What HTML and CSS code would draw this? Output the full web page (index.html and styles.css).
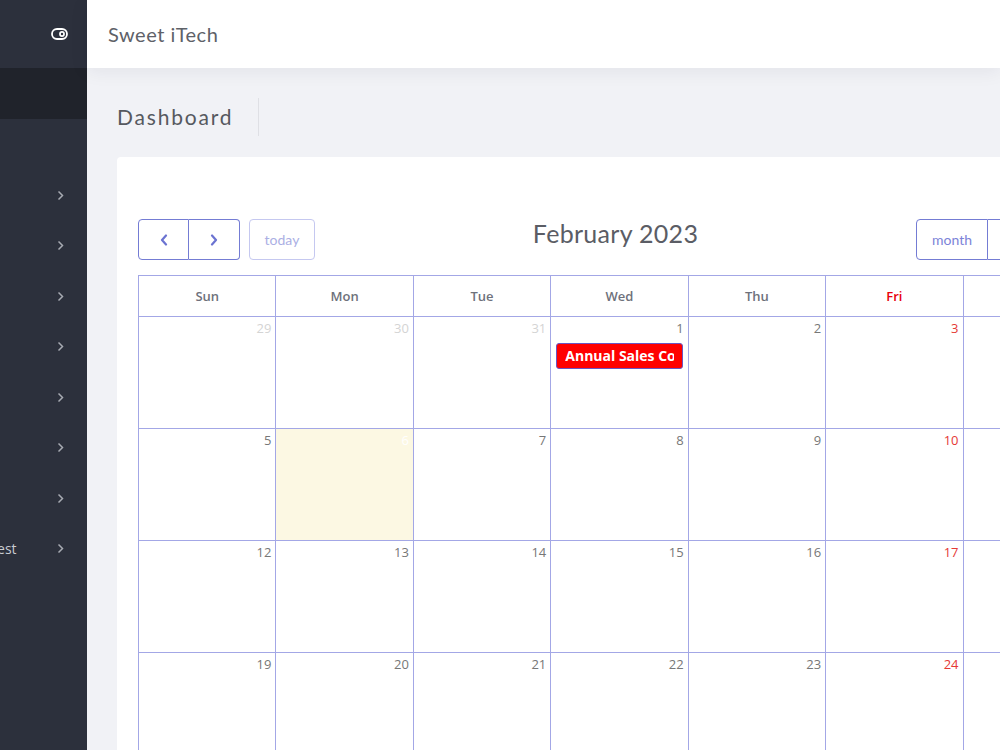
FILE: index.html
```html
<!DOCTYPE html>
<html>
<head>
    <title>Sweet iTech - Dashboard</title>
    <link rel="stylesheet" href="styles.css">
</head>
<body>
    <aside class="sidebar">
        <div class="sidebar-inner">
            <div class="brand">
                <span class="brand-name">SiT HRMS</span>
                <svg class="toggle" width="17" height="12" viewBox="0 0 17 12">
                    <rect x="1" y="1" width="15" height="10" rx="5" fill="none" stroke="#fff" stroke-width="1.8"/>
                    <circle cx="11" cy="6" r="2.9" fill="#fff"/>
                    <circle cx="11" cy="6" r="1.2" fill="#2c303c"/>
                </svg>
            </div>
            <div class="profile"></div>
            <ul class="menu">
                <li>Employees <svg class="chev" width="7" height="11" viewBox="0 0 7 11"><polyline points="1.5,1.5 5.5,5.5 1.5,9.5"/></svg></li>
                <li>Departments <svg class="chev" width="7" height="11" viewBox="0 0 7 11"><polyline points="1.5,1.5 5.5,5.5 1.5,9.5"/></svg></li>
                <li>Attendance <svg class="chev" width="7" height="11" viewBox="0 0 7 11"><polyline points="1.5,1.5 5.5,5.5 1.5,9.5"/></svg></li>
                <li>Payroll <svg class="chev" width="7" height="11" viewBox="0 0 7 11"><polyline points="1.5,1.5 5.5,5.5 1.5,9.5"/></svg></li>
                <li>Leave <svg class="chev" width="7" height="11" viewBox="0 0 7 11"><polyline points="1.5,1.5 5.5,5.5 1.5,9.5"/></svg></li>
                <li>Reports <svg class="chev" width="7" height="11" viewBox="0 0 7 11"><polyline points="1.5,1.5 5.5,5.5 1.5,9.5"/></svg></li>
                <li>Settings <svg class="chev" width="7" height="11" viewBox="0 0 7 11"><polyline points="1.5,1.5 5.5,5.5 1.5,9.5"/></svg></li>
                <li>Attendance Request <svg class="chev" width="7" height="11" viewBox="0 0 7 11"><polyline points="1.5,1.5 5.5,5.5 1.5,9.5"/></svg></li>
            </ul>
        </div>
    </aside>

    <div class="main">
        <header class="topbar">Sweet iTech</header>

        <div class="content">
            <div class="page-title">
                <h1>Dashboard</h1>
            </div>

            <div class="card">
                <div class="cal-toolbar">
                    <div class="btn-row">
                        <button class="cal-btn btn-prev">
                            <svg width="8" height="12" viewBox="0 0 8 12"><polyline points="6,1.5 2,6 6,10.5"/></svg>
                        </button>
                        <button class="cal-btn btn-next">
                            <svg width="8" height="12" viewBox="0 0 8 12"><polyline points="2,1.5 6,6 2,10.5"/></svg>
                        </button>
                        <button class="cal-btn btn-today" disabled>today</button>
                    </div>
                    <h2 class="cal-title">February 2023</h2>
                    <div class="btn-row">
                        <button class="cal-btn btn-month">month</button>
                        <button class="cal-btn btn-week">week</button>
                        <button class="cal-btn btn-day">day</button>
                    </div>
                </div>

                <table class="cal-grid">
                    <thead>
                        <tr>
                            <th>Sun</th><th>Mon</th><th>Tue</th><th>Wed</th><th>Thu</th><th class="fri">Fri</th><th>Sat</th>
                        </tr>
                    </thead>
                    <tbody>
                        <tr>
                            <td class="other"><div class="day-num">29</div></td>
                            <td class="other"><div class="day-num">30</div></td>
                            <td class="other"><div class="day-num">31</div></td>
                            <td><div class="day-num">1</div>
                                <div class="cal-event"><span class="cal-event-title">Annual Sales Conference</span></div>
                            </td>
                            <td><div class="day-num">2</div></td>
                            <td class="fri"><div class="day-num">3</div></td>
                            <td><div class="day-num">4</div></td>
                        </tr>
                        <tr>
                            <td><div class="day-num">5</div></td>
                            <td class="today"><div class="day-num">6</div></td>
                            <td><div class="day-num">7</div></td>
                            <td><div class="day-num">8</div></td>
                            <td><div class="day-num">9</div></td>
                            <td class="fri"><div class="day-num">10</div></td>
                            <td><div class="day-num">11</div></td>
                        </tr>
                        <tr>
                            <td><div class="day-num">12</div></td>
                            <td><div class="day-num">13</div></td>
                            <td><div class="day-num">14</div></td>
                            <td><div class="day-num">15</div></td>
                            <td><div class="day-num">16</div></td>
                            <td class="fri"><div class="day-num">17</div></td>
                            <td><div class="day-num">18</div></td>
                        </tr>
                        <tr>
                            <td><div class="day-num">19</div></td>
                            <td><div class="day-num">20</div></td>
                            <td><div class="day-num">21</div></td>
                            <td><div class="day-num">22</div></td>
                            <td><div class="day-num">23</div></td>
                            <td class="fri"><div class="day-num">24</div></td>
                            <td><div class="day-num">25</div></td>
                        </tr>
                        <tr>
                            <td><div class="day-num">26</div></td>
                            <td><div class="day-num">27</div></td>
                            <td><div class="day-num">28</div></td>
                            <td class="other"><div class="day-num">1</div></td>
                            <td class="other"><div class="day-num">2</div></td>
                            <td class="other fri"><div class="day-num">3</div></td>
                            <td class="other"><div class="day-num">4</div></td>
                        </tr>
                    </tbody>
                </table>
            </div>
        </div>
    </div>
</body>
</html>
```

FILE: styles.css
```css
body {
    margin: 0;
    height: 100vh;
    overflow: hidden;
    display: flex;
    font-family: "Open Sans", sans-serif;
    background: #f1f2f6;
}

/* sidebar */
.sidebar {
    width: 87px;
    flex-shrink: 0;
    background: #2c303c;
    display: flex;
    justify-content: flex-end;
    overflow: hidden;
}
.sidebar-inner {
    width: 260px;
    flex-shrink: 0;
}
.brand {
    height: 68px;
    display: flex;
    align-items: center;
    justify-content: space-between;
    padding: 0 19px 0 24px;
    color: #fff;
    font-family: Lato, sans-serif;
    font-size: 20px;
}
.profile {
    height: 51px;
    background: #20232b;
}
.menu {
    list-style: none;
    margin: 0;
    padding: 51px 0 0;
}
.menu li {
    height: 50.5px;
    display: flex;
    align-items: center;
    padding: 0 23px 0 58px;
    color: #c9cbd1;
    font-size: 14px;
}
.chev {
    margin-left: auto;
    fill: none;
    stroke: #a7aab2;
    stroke-width: 1.5;
}

/* main area */
.main {
    flex: 1;
    min-width: 0;
    display: flex;
    flex-direction: column;
}
.topbar {
    position: relative;
    z-index: 1;
    height: 68px;
    flex-shrink: 0;
    display: flex;
    align-items: center;
    padding-left: 21px;
    background: #fff;
    box-shadow: 0 3px 18px rgba(30, 35, 60, 0.07);
    font-family: Lato, sans-serif;
    font-size: 20px;
    letter-spacing: 0.5px;
    color: #5e6168;
}
.content {
    padding: 30px 0 0 30px;
}
.page-title {
    display: flex;
    align-items: center;
    height: 38px;
}
.page-title h1 {
    margin: 0;
    padding-right: 25px;
    border-right: 1px solid #dfe0e5;
    font-family: Lato, sans-serif;
    font-weight: 400;
    font-size: 21px;
    letter-spacing: 1.8px;
    line-height: 38px;
    color: #56595f;
}
.card {
    margin-top: 21px;
    width: max-content;
    padding: 62px 21px 21px;
    background: #fff;
    border-radius: 4px;
}

/* calendar */
.cal-toolbar {
    width: 963px;
    display: flex;
    justify-content: space-between;
    align-items: flex-start;
    margin-bottom: 15px;
}
.btn-row {
    display: flex;
}
.cal-btn {
    box-sizing: border-box;
    height: 41px;
    display: flex;
    align-items: center;
    justify-content: center;
    padding: 0;
    background: #fff;
    border: 1px solid #747cd4;
    color: #7c83d8;
    font-family: Lato, sans-serif;
    font-size: 14px;
}
.cal-btn svg {
    fill: none;
    stroke: #6b73d1;
    stroke-width: 2.2;
    stroke-linecap: round;
    stroke-linejoin: round;
}
.btn-prev {
    width: 51px;
    border-radius: 4px 0 0 4px;
}
.btn-next {
    width: 51px;
    border-left: 0;
    border-radius: 0 4px 4px 0;
}
.btn-today {
    width: 66px;
    margin-left: 9px;
    border-color: #c5c8f0;
    border-radius: 4px;
    color: #abafe4;
}
.btn-month {
    width: 72px;
    border-radius: 4px 0 0 4px;
}
.btn-week {
    width: 59px;
    border-left: 0;
}
.btn-day {
    width: 54px;
    border-left: 0;
    border-radius: 0 4px 4px 0;
}
.cal-title {
    margin: 0;
    font-family: Lato, sans-serif;
    font-weight: 400;
    font-size: 25px;
    letter-spacing: 0.3px;
    line-height: 28px;
    color: #5b5d65;
}

.cal-grid {
    width: 963px;
    table-layout: fixed;
    border-collapse: collapse;
}
.cal-grid th,
.cal-grid td {
    border: 1px solid #a3a7e6;
    padding: 0;
}
.cal-grid th {
    height: 40px;
    font-size: 13px;
    font-weight: 600;
    color: #6e717b;
    vertical-align: middle;
    line-height: 36px;
}
.cal-grid th.fri {
    color: #e8000b;
}
.cal-grid td {
    height: 111px;
    vertical-align: top;
}
.day-num {
    text-align: right;
    padding: 2px 4px 0;
    font-size: 13px;
    line-height: 18px;
    color: #777;
}
.fri .day-num {
    color: #e53935;
}
.other .day-num {
    color: #d4d4d4;
}
.other.fri .day-num {
    color: #f2b4b2;
}
.today {
    background: #fcf8e3;
}
.today .day-num {
    color: #fff;
}
.cal-event {
    margin: 6px 5px 0;
    padding: 0 8px;
    background: #f00;
    border: 1px solid #6a55c2;
    border-radius: 3px;
    color: #fff;
    font-size: 14px;
    font-weight: 700;
    line-height: 24px;
}
.cal-event-title {
    display: block;
    overflow: hidden;
    white-space: nowrap;
}
```
